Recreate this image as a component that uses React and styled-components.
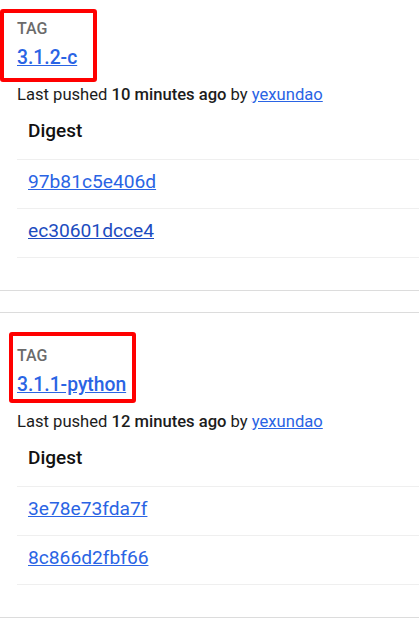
import React from "react";
import styled, { createGlobalStyle } from "styled-components";

const GlobalStyle = createGlobalStyle`
  body {
    margin: 0;
    background: #ffffff;
    font-family: Roboto, "Liberation Sans", Arial, sans-serif;
    color: #1c1c1c;
  }
`;

const Page = styled.div`
  margin-top: -15px;
  display: flex;
  flex-direction: column;
  gap: 21px;
`;

const Card = styled.section`
  border-top: 1px solid #dcdcdc;
  border-bottom: 1px solid #dcdcdc;
  padding: 33px 0 32px 17px;
`;

const TagBlock = styled.div`
  position: relative;
  width: fit-content;
  display: flex;
  flex-direction: column;
`;

const Highlight = styled.div`
  position: absolute;
  left: ${(props) => props.left}px;
  top: ${(props) => props.top}px;
  width: ${(props) => props.width}px;
  height: ${(props) => props.height}px;
  border: 4px solid #ff0000;
  border-radius: 3px;
  box-sizing: border-box;
  pointer-events: none;
`;

const TagLabel = styled.span`
  font-size: 16px;
  line-height: 20px;
  font-weight: 500;
  color: #6b6b6b;
`;

const TagLink = styled.a`
  margin-top: 7px;
  font-size: 19.3px;
  line-height: 24px;
  font-weight: 500;
  color: #2a64e4;
  text-decoration: underline;
`;

const Meta = styled.div`
  margin-top: 15px;
  font-size: 16.6px;
  line-height: 20px;
  color: #1c1c1c;

  b {
    font-weight: 500;
  }
`;

const UserLink = styled.a`
  color: #2a64e4;
  text-decoration: underline;
`;

const Table = styled.div`
  margin-top: 4px;
  display: flex;
  flex-direction: column;
`;

const HeadCell = styled.div`
  padding: 10px 11px 16px;
  font-size: 19px;
  line-height: 24px;
  font-weight: 500;
  color: #111;
  border-bottom: 1px solid #efefef;
`;

const Row = styled.div`
  height: 48px;
  box-sizing: content-box;
  padding: 0 11px;
  display: flex;
  align-items: flex-start;
  border-bottom: 1px solid #efefef;
`;

const DigestLink = styled.a`
  margin-top: 10px;
  font-size: 19.2px;
  line-height: 24px;
  color: ${(props) => (props.$visited ? "#1c4cc0" : "#2a64e4")};
  text-decoration: underline;
`;

const tags = [
  {
    name: "3.1.2-c",
    pushed: "10 minutes ago",
    box: { left: -17, top: -10, width: 97, height: 73 },
    digests: [
      { id: "97b81c5e406d" },
      { id: "ec30601dcce4", visited: true },
    ],
  },
  {
    name: "3.1.1-python",
    pushed: "12 minutes ago",
    box: { left: -8, top: -14, width: 127, height: 71 },
    digests: [{ id: "3e78e73fda7f" }, { id: "8c866d2fbf66" }],
  },
];

const App = () => {
  return (
    <>
      <GlobalStyle />
      <Page>
        {tags.map((tag) => (
          <Card key={tag.name}>
            <TagBlock>
              <TagLabel>TAG</TagLabel>
              <TagLink href="#">{tag.name}</TagLink>
              <Highlight {...tag.box} />
            </TagBlock>
            <Meta>
              Last pushed <b>{tag.pushed}</b> by{" "}
              <UserLink href="#">yexundao</UserLink>
            </Meta>
            <Table>
              <HeadCell>Digest</HeadCell>
              {tag.digests.map((d) => (
                <Row key={d.id}>
                  <DigestLink href="#" $visited={d.visited}>
                    {d.id}
                  </DigestLink>
                </Row>
              ))}
            </Table>
          </Card>
        ))}
      </Page>
    </>
  );
};

export default App;
